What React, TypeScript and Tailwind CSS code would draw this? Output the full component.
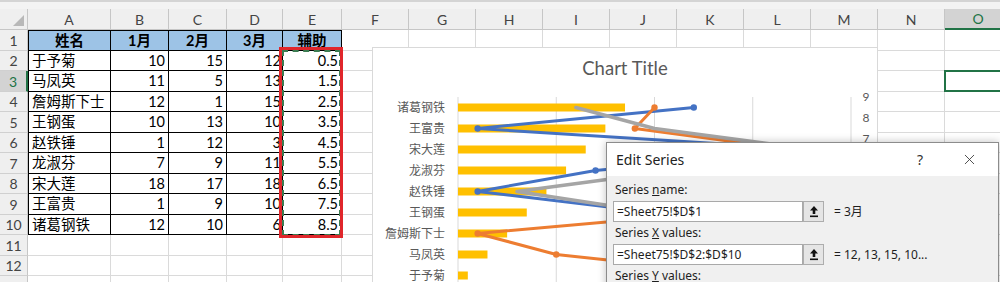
import { X } from "lucide-react";

const COLS = [28, 83, 58, 58, 56, 59, 67, 67, 67, 67, 67, 67, 67, 67, 67, 67];
const LETTERS = ["", "A", "B", "C", "D", "E", "F", "G", "H", "I", "J", "K", "L", "M", "N", "O"];

const NAMES = ["于予菊", "马凤英", "詹姆斯下士", "王钢蛋", "赵铁锤", "龙淑芬", "宋大莲", "王富贵", "诸葛钢铁"];
const M1 = [10, 11, 12, 10, 1, 7, 18, 1, 12];
const M2 = [15, 5, 1, 13, 12, 9, 17, 9, 10];
const M3 = [12, 13, 15, 10, 3, 11, 18, 10, 6];
const AUX = NAMES.map((_, i) => i + 0.5);

const FONT = "font-['Lato','Noto_Sans_CJK_SC',sans-serif]";
const UI = "font-['Noto_Sans','Noto_Sans_CJK_SC',sans-serif]";

// chart scale, in page pixels
const xp = (v: number) => 457 + v * 19.65;
const yp = (v: number) => 96 + (9 - v) * 21;

function cellText(r: number, c: number): string {
  if (r === 1) return ["姓名", "1月", "2月", "3月", "辅助"][c - 1] ?? "";
  const i = r - 2;
  if (i < 0 || i > 8) return "";
  if (c === 1) return NAMES[i];
  if (c === 2) return String(M1[i]);
  if (c === 3) return String(M2[i]);
  if (c === 4) return String(M3[i]);
  if (c === 5) return String(AUX[i]);
  return "";
}

function Row({ r }: { r: number }) {
  const tall = r % 2 === 1;
  return (
    <div className={`flex ${tall ? "h-[21px]" : "h-[20px]"}`}>
      {COLS.map((w, c) => {
        if (c === 0) {
          const sel = r === 3;
          return (
            <div
              key={c}
              style={{ width: w }}
              className={`shrink-0 flex items-center justify-center text-[14px] border-b border-[#d0d0d0] ${
                sel
                  ? "bg-[#d3d3d3] text-[#217346] border-r-2 border-r-[#217346]"
                  : "bg-[#efefef] text-[#444] border-r border-r-[#c6c6c6]"
              }`}
            >
              {r}
            </div>
          );
        }
        const inTable = r <= 10 && c <= 5;
        const text = cellText(r, c);
        const selected = r === 3 && c === 15;
        let cls = "";
        if (inTable) {
          cls = `border-r border-b border-black ${r === 1 ? "border-t" : ""} ${c === 1 ? "border-l" : ""} ${
            r === 1
              ? "bg-[#9dc3e6] font-bold justify-center"
              : c === 1
                ? "bg-white justify-start pl-[3px]"
                : c === 4
                  ? "bg-white justify-end pr-[1px]"
                  : "bg-white justify-end pr-[3px]"
          }`;
        } else {
          cls = "border-r border-b border-[#dadada] bg-white";
        }
        return (
          <div
            key={c}
            style={{ width: w }}
            className={`relative shrink-0 flex items-center text-[14.5px] text-black whitespace-nowrap ${cls}`}
          >
            {text}
            {selected && <div className="absolute -top-px -left-px -right-px -bottom-px border-2 border-[#217346]" />}
          </div>
        );
      })}
    </div>
  );
}

function UploadIcon() {
  return (
    <svg width="10" height="13" viewBox="0 0 10 13">
      <path d="M5 1 L9 5.5 L6.3 5.5 L6.3 9 L3.7 9 L3.7 5.5 L1 5.5 Z" fill="#111" />
      <rect x="1" y="10.5" width="8" height="1.6" fill="#111" />
    </svg>
  );
}

function Chart() {
  const series = [
    { data: M1, color: "#4472c4", w: 3, dots: true },
    { data: M2, color: "#ed7d31", w: 3, dots: true },
    { data: M3, color: "#a5a5a5", w: 3.5, dots: false },
  ];
  return (
    <div className="absolute left-[372px] top-[47px] w-[506px] h-[250px] bg-white border border-[#d9d9d9]">
      <div className={`pt-[8px] text-center text-[18.5px] leading-[24px] text-[#595959] ${FONT}`}>Chart Title</div>
      <svg className="absolute left-0 top-0" width="506" height="250" viewBox="372 47 506 250">
        {[0, 5, 10, 15, 20].map((v) => (
          <line key={v} x1={xp(v)} x2={xp(v)} y1={96} y2={300} stroke="#d9d9d9" strokeWidth="1" />
        ))}
        {NAMES.map((n, i) => (
          <g key={n}>
            <text
              x={444}
              y={yp(AUX[i]) + 4}
              textAnchor="end"
              fontSize="12"
              fill="#595959"
              fontFamily="'Noto Sans CJK SC', sans-serif"
            >
              {n}
            </text>
            <rect x={457} y={yp(AUX[i]) - 4} width={AUX[i] * 19.65} height={8} fill="#ffc000" />
          </g>
        ))}
        {/* secondary axis: only the top labels show above the dialog */}
        {[7, 8, 9].map((v) => (
          <text key={v} x={865} y={yp(v) + 4} textAnchor="middle" fontSize="12" fill="#595959" fontFamily="Lato, sans-serif">
            {v}
          </text>
        ))}
        {series.map((s, k) => (
          <g key={k}>
            <polyline
              points={s.data.map((x, i) => `${xp(x)},${yp(AUX[i])}`).join(" ")}
              fill="none"
              stroke={s.color}
              strokeWidth={s.w}
              strokeLinejoin="round"
              strokeLinecap="round"
            />
            {s.dots && s.data.map((x, i) => <circle key={i} cx={xp(x)} cy={yp(AUX[i])} r={3.2} fill={s.color} />)}
          </g>
        ))}
      </svg>
    </div>
  );
}

function EditSeries() {
  return (
    <div className={`absolute left-[606px] top-[142px] w-[393px] h-[150px] border border-[#8c8c8c] shadow-[0_0_8px_rgba(0,0,0,0.25)] ${UI}`}>
      <div className="h-[33px] bg-white flex items-center pl-[9px] text-[14px] text-[#222]">
        <span>Edit Series</span>
        <div className="ml-auto mr-[20px] flex items-center gap-[33px]">
          <span className="w-[16px] text-center text-[14px] text-[#333]">?</span>
          <X size={17} strokeWidth={1.2} className="text-[#333]" />
        </div>
      </div>
      <div className="h-[117px] bg-[#f0f0f0] px-[6px] pt-[3px] text-[12px] text-[#1e1e1e]">
        <div className="h-[22px] flex items-center pl-[2px]">
          Series&nbsp;<u>n</u>ame:
        </div>
        <div className="flex items-center h-[21px]">
          <div className="w-[190px] h-[21px] bg-white border border-[#a9a9a9] flex items-center pl-[3px]">=Sheet75!$D$1</div>
          <div className="w-[21px] h-[21px] bg-[#e5e5e5] border border-[#adadad] flex items-center justify-center">
            <UploadIcon />
          </div>
          <span className="ml-[10px]">= 3月</span>
        </div>
        <div className="h-[22px] flex items-center pl-[2px]">
          Series&nbsp;<u>X</u>&nbsp;values:
        </div>
        <div className="flex items-center h-[21px]">
          <div className="w-[190px] h-[21px] bg-white border border-[#a9a9a9] flex items-center pl-[3px]">=Sheet75!$D$2:$D$10</div>
          <div className="w-[21px] h-[21px] bg-[#e5e5e5] border border-[#adadad] flex items-center justify-center">
            <UploadIcon />
          </div>
          <span className="ml-[10px]">= 12, 13, 15, 10...</span>
        </div>
        <div className="h-[22px] flex items-center pl-[2px]">
          Series&nbsp;<u>Y</u>&nbsp;values:
        </div>
      </div>
    </div>
  );
}

export default function App() {
  return (
    <div className={`relative w-[1000px] h-[282px] overflow-hidden bg-white ${FONT}`}>
      {/* strip under the formula bar */}
      <div className="h-[9px] bg-[#f3f3f3] border-t-2 border-[#d4d4d4]" />

      {/* column headers */}
      <div className="flex h-[21px]">
        {COLS.map((w, c) => (
          <div
            key={c}
            style={{ width: w }}
            className={`relative shrink-0 flex items-center justify-center text-[14px] border-r border-[#c6c6c6] ${
              c === 15
                ? "bg-[#d3d3d3] text-[#217346] border-b-2 border-b-[#217346]"
                : "bg-[#efefef] text-[#444] border-b border-b-[#c6c6c6]"
            }`}
          >
            {LETTERS[c]}
            {c === 0 && (
              <svg className="absolute right-[3px] bottom-[3px]" width="11" height="11" viewBox="0 0 11 11">
                <polygon points="11,0 11,11 0,11" fill="#b8b8b8" />
              </svg>
            )}
          </div>
        ))}
      </div>

      {Array.from({ length: 13 }, (_, i) => (
        <Row key={i} r={i + 1} />
      ))}

      {/* copy marquee and red highlight on E2:E10 */}
      <div className="absolute left-[282px] top-[50px] w-[59px] h-[186px] border-2 border-dashed border-[#3c7d52]" />
      <div className="absolute left-[279px] top-[47px] w-[64px] h-[191px] border-[3px] border-[#e0262b]" />

      <Chart />
      <EditSeries />
    </div>
  );
}
